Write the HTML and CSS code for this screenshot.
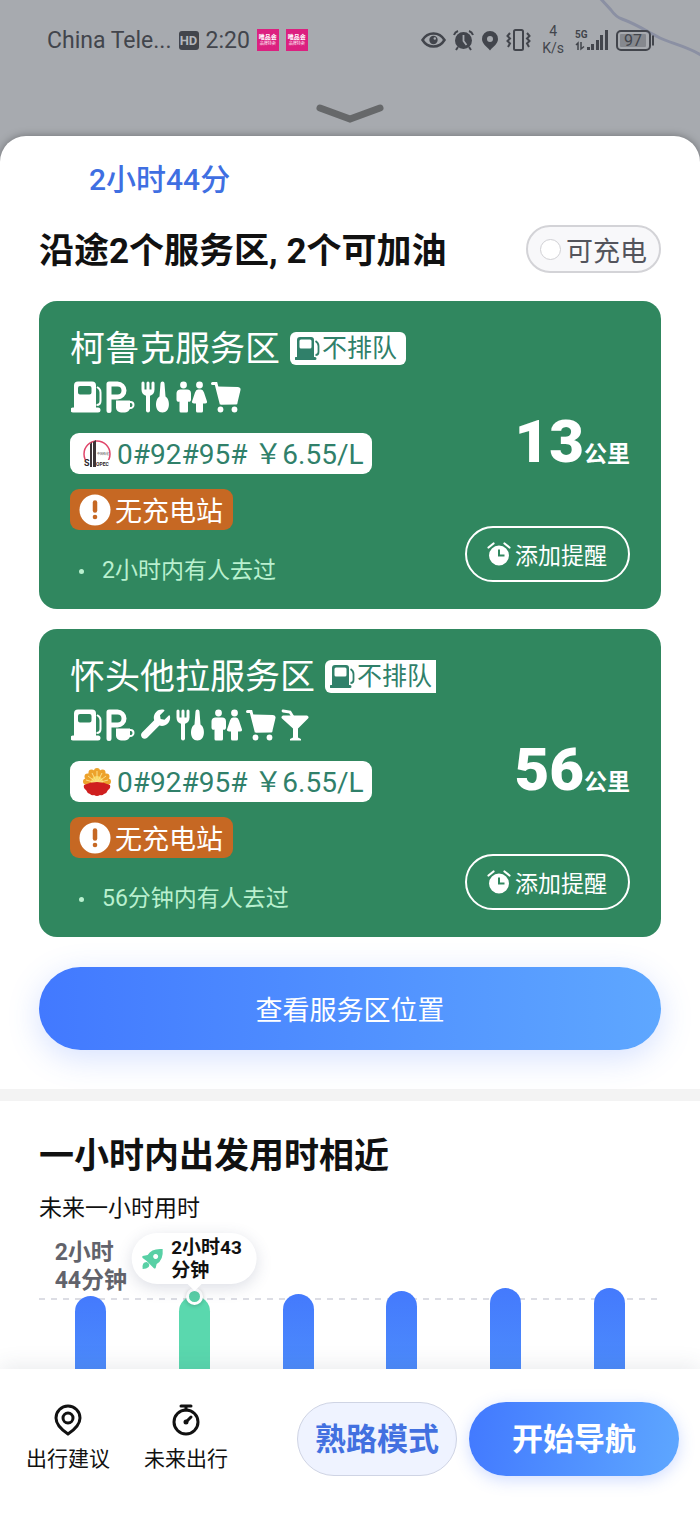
FILE: index.html
```html
<!DOCTYPE html>
<html lang="zh-CN">
<head>
    <meta charset="UTF-8">
    <meta name="viewport" content="width=device-width, initial-scale=1.0">
    <title>沿途服务区</title>
    <link rel="stylesheet" href="styles.css">
</head>
<body>

<!-- shared icons -->
<svg class="sprite" width="0" height="0" aria-hidden="true">
    <symbol id="pump" viewBox="0 0 31 32">
        <path fill-rule="evenodd" d="M7 0h14a4 4 0 0 1 4 4v22h2a2.500 2.500 0 0 1 0 5H2a2 2 0 0 1 0-5h1V4a4 4 0 0 1 4-4zM9 4.500a2 2 0 0 0-2 2V11a2 2 0 0 0 2 2h9.500a2 2 0 0 0 2-2V6.500a2 2 0 0 0-2-2z"/>
        <path d="M26 5.500l2 1.500q1.500 1.500 1.500 4v8.500q0 4-4 4" fill="none" stroke="currentColor" stroke-width="2"/>
    </symbol>
    <symbol id="pump-line" viewBox="0 0 25 25">
        <path fill-rule="evenodd" d="M5 1h11a3 3 0 0 1 3 3v17h1a1.500 1.500 0 0 1 0 3H1a1.500 1.500 0 0 1 0-3h1V4a3 3 0 0 1 3-3zM6 3.500a1.500 1.500 0 0 0-1.500 1.500v6a1.500 1.500 0 0 0 1.500 1.500h9a1.500 1.500 0 0 0 1.500-1.500V5A1.500 1.500 0 0 0 15 3.500z"/>
        <path d="M20.500 5q3 2 3 5v6q0 3-3 3" fill="none" stroke="currentColor" stroke-width="1.800"/>
    </symbol>
    <symbol id="rest" viewBox="0 0 31 32">
        <path d="M3 29V2.500h8.500a6.300 6.300 0 0 1 0 13H3" fill="none" stroke="currentColor" stroke-width="5" stroke-linecap="round" stroke-linejoin="round"/>
        <path d="M10 19h14v7a5 5 0 0 1-5 5h-4a5 5 0 0 1-5-5z"/>
        <path d="M23 20.500h1.500a2.500 2.500 0 0 1 0 6H23" fill="none" stroke="currentColor" stroke-width="2"/>
    </symbol>
    <symbol id="wrench" viewBox="0 0 545 560">
        <path d="M507.730 109.100c-2.240-9.030-13.540-12.090-20.120-5.510l-74.360 74.360-67.880-11.310-11.310-67.880 74.360-74.360c6.620-6.620 3.430-17.900-5.660-20.160-47.380-11.740-99.550.910-136.580 37.930-39.640 39.640-50.550 97.100-34.050 147.200L18.740 402.760c-24.990 24.990-24.990 65.510 0 90.500 24.990 24.990 65.510 24.990 90.500 0l213.210-213.210c50.120 16.710 107.470 5.680 147.370-34.220 37.070-37.070 49.700-89.320 37.910-136.730z"/>
    </symbol>
    <symbol id="food" viewBox="0 0 31 32">
        <path d="M2 1.500V8q0 5 5 5t5-5V1.500M7 1.500V12" fill="none" stroke="currentColor" stroke-width="3" stroke-linecap="round"/>
        <path d="M2 8h10q-1 5-5 5T2 8z"/>
        <path d="M7 12v17" fill="none" stroke="currentColor" stroke-width="4" stroke-linecap="round"/>
        <path d="M19.500 2a2 2 0 0 1 4 0l1 13c5 3 5 16-3 16s-8-13-3-16z"/>
    </symbol>
    <symbol id="people" viewBox="0 0 31 32">
        <circle cx="7.500" cy="3.500" r="3.400"/>
        <path d="M4 8h7a4 4 0 0 1 4 4v6a2 2 0 0 1-3 2v9.500a1.500 1.500 0 0 1-1.500 1.500H5a1.500 1.500 0 0 1-1.500-1.500V20A2 2 0 0 1 .500 18v-6A4 4 0 0 1 4 8z"/>
        <circle cx="23.500" cy="3.500" r="3.400"/>
        <path d="M22 8h3q2 0 3 3l3 9q.500 2-2 2h-2v7.500a1.500 1.500 0 0 1-1.500 1.500h-4a1.500 1.500 0 0 1-1.500-1.500V22h-2q-2.500 0-2-2l3-9q1-3 3-3z"/>
    </symbol>
    <symbol id="cart" viewBox="0 0 31 32">
        <path d="M1.500 2H5l5 19.500h15" fill="none" stroke="currentColor" stroke-width="3" stroke-linecap="round"/>
        <path d="M6 5l21 .500q3 .500 2.500 3L27 19q-.500 3.500-3 3.500L10 23z"/>
        <circle cx="9.500" cy="28" r="2.900"/>
        <circle cx="23.500" cy="28" r="2.900"/>
    </symbol>
    <symbol id="drink" viewBox="0 0 31 32">
        <path d="M2 6h24q2.500 1 1 3L17 19v9l3 1.500V31H9v-1.500l3-1.500v-9L1 9Q-.500 7 2 6z"/>
        <path d="M2 1.500l7 1 3 5" fill="none" stroke="currentColor" stroke-width="2.800" stroke-linecap="round"/>
    </symbol>
    <symbol id="alarm" viewBox="0 0 24 24">
        <path fill-rule="evenodd" d="M12 3.500a10 10 0 1 1 0 20 10 10 0 0 1 0-20zM11 7.500v7h6.500V12.500H13v-5z"/>
        <path d="M1.500 5.500l5-4M22.500 5.500l-5-4" fill="none" stroke="currentColor" stroke-width="2.200" stroke-linecap="round"/>
    </symbol>
    <symbol id="warn" viewBox="0 0 32 32">
        <circle cx="16" cy="16" r="15.500" fill="#fff"/>
        <path d="M16 8.500v8" stroke="#c66823" stroke-width="4.500" stroke-linecap="round"/>
        <circle cx="16" cy="23" r="2.300" fill="#c66823"/>
    </symbol>
</svg>

<div class="map">
    <svg class="river" width="110" height="60" viewBox="0 0 110 60" aria-hidden="true">
        <path d="M10-2l11 12q5 7 11 9c14 5 28 14 38 19s26 8 41 17" fill="none" stroke="#8b90a3" stroke-width="3"/>
    </svg>
    <header class="status">
        <span class="carrier">China Tele...</span>
        <span class="hd">HD</span>
        <span class="carrier">2:20</span>
        <span class="app"><b>唯品会</b><small>品牌特卖</small></span>
        <span class="app"><b>唯品会</b><small>品牌特卖</small></span>
        <div class="status-right">
            <svg width="25" height="18" viewBox="0 0 25 18"><path d="M1.500 9q4-6.500 11-6.500T23.500 9q-4 6.500-11 6.500T1.500 9z" fill="none" stroke="#42454c" stroke-width="2.500"/><circle cx="12.500" cy="9" r="4.200"/><circle cx="13.800" cy="7.500" r="1.200" fill="#a7aab0"/></svg>
            <svg width="21" height="21" viewBox="0 0 21 21"><circle cx="10.500" cy="10.500" r="8.500"/><path d="M1 5q1-3 4-4M20 5q-1-3-4-4M5 17l-2 3M16 17l2 3" fill="none" stroke="#42454c" stroke-width="2"/><path d="M10.500 5v6l3 4" fill="none" stroke="#a7aab0" stroke-width="1.800"/></svg>
            <svg width="18" height="21" viewBox="0 0 18 21"><path fill-rule="evenodd" d="M9 1a8 8 0 0 1 8 8c0 5-5 7.500-8 11.500C6 16.500 1 14 1 9a8 8 0 0 1 8-8zm0 5a3 3 0 1 0 0 6 3 3 0 0 0 0-6z"/></svg>
            <svg width="25" height="22" viewBox="0 0 25 22"><g fill="none" stroke="#42454c" stroke-width="2"><rect x="8" y="1" width="9" height="20" rx="1.500"/><path d="M4 4L1.500 7 4 9.500 1.500 12 4 14.500 2 18M21 4l2.500 3L21 9.500l2.500 2.500-2.500 2.500 2 3.500"/></g></svg>
            <span class="speed">4<br>K/s</span>
            <svg width="34" height="22" viewBox="0 0 34 22"><text x="0" y="9" font-size="10" font-weight="700">5G</text><path d="M12 18h3v3h-3zM16 15h3v6h-3zM21 11h3v10h-3zM25 6h3v15h-3zM30 1h3v20h-3z"/><path d="M3 21v-7l-2 2M6 13v7l3-2.500" fill="none" stroke="#42454c" stroke-width="1.500"/></svg>
            <svg width="39" height="21" viewBox="0 0 39 21"><rect x="1" y="1" width="33" height="19" rx="4" fill="none" stroke="#42454c" stroke-width="2"/><rect x="4" y="4" width="26" height="13" rx="1" fill="#85888e"/><path d="M36 5.500h2v10h-2z"/><text x="17" y="16" font-size="16" text-anchor="middle">97</text></svg>
        </div>
    </header>
    <svg class="chevron" width="70" height="22" viewBox="0 0 70 22" aria-hidden="true">
        <path d="M5 5l30 11L65 5" fill="none" stroke="#66686a" stroke-width="7" stroke-linecap="round"/>
    </svg>
</div>

<main class="sheet">
    <section class="services">
        <div class="duration">2小时44分</div>
        <div class="title-row">
            <h2>沿途2个服务区, 2个可加油</h2>
            <label class="filter" for="charge"><input type="checkbox" id="charge" name="charge">可充电</label>
        </div>

        <article class="card">
            <div class="info">
                <div class="name-row">
                    <h3>柯鲁克服务区</h3>
                    <span class="tag"><svg width="25" height="25"><use href="#pump-line"/></svg>不排队</span>
                </div>
                <div class="amenities">
                    <svg><use href="#pump"/></svg>
                    <svg><use href="#rest"/></svg>
                    <svg><use href="#food"/></svg>
                    <svg><use href="#people"/></svg>
                    <svg><use href="#cart"/></svg>
                </div>
                <div class="price">
                    <svg width="30" height="30" viewBox="0 0 30 30" aria-hidden="true">
                        <circle cx="15" cy="15" r="13" fill="none" stroke="#e0466a" stroke-width="1.500"/>
                        <path d="M8 5l2-2v18H8zM11 3l3-2v20h-3z" fill="#3d3538"/>
                        <text x="15" y="16" font-size="3" fill="#333">中国石化</text>
                        <path d="M1 21h28v8H1z" fill="#fff"/>
                        <path d="M8 20h2v8H8zM11 20h3v8h-3z" fill="#3d3538"/>
                        <text x="2" y="27" font-size="9" font-weight="700" fill="#2f2628">S</text>
                        <text x="14" y="27" font-size="5" font-weight="700" fill="#2f2628">OPEC</text>
                    </svg>
                    <span>0#92#95# ￥6.55/L</span>
                </div>
                <div class="no-charge"><svg width="32" height="32"><use href="#warn"/></svg>无充电站</div>
                <div class="visited">2小时内有人去过</div>
            </div>
            <div class="side">
                <div class="distance"><strong>13</strong>公里</div>
                <button type="button" class="remind"><svg width="24" height="24"><use href="#alarm"/></svg>添加提醒</button>
            </div>
        </article>

        <article class="card">
            <div class="info">
                <div class="name-row">
                    <h3>怀头他拉服务区</h3>
                    <span class="tag tag-cut"><svg width="25" height="25"><use href="#pump-line"/></svg>不排队</span>
                </div>
                <div class="amenities">
                    <svg><use href="#pump"/></svg>
                    <svg><use href="#rest"/></svg>
                    <svg><use href="#wrench"/></svg>
                    <svg><use href="#food"/></svg>
                    <svg><use href="#people"/></svg>
                    <svg><use href="#cart"/></svg>
                    <svg><use href="#drink"/></svg>
                </div>
                <div class="price">
                    <svg width="30" height="30" viewBox="0 0 30 30" aria-hidden="true">
                        <g fill="#eda22c">
                            <circle cx="15" cy="15" r="12"/>
                            <circle cx="15" cy="4" r="3"/><circle cx="9.500" cy="5.500" r="3"/><circle cx="20.500" cy="5.500" r="3"/>
                            <circle cx="5.500" cy="9.500" r="3"/><circle cx="24.500" cy="9.500" r="3"/>
                            <circle cx="4" cy="14.500" r="3"/><circle cx="26" cy="14.500" r="3"/>
                        </g>
                        <circle cx="15" cy="15" r="6" fill="#f8d55c"/>
                        <path d="M15 16V4M15 16L10 6M15 16l5-10M15 16L6 9M15 16l9-7M15 16L4 13M15 16l11-3" stroke="#fbe08a" stroke-width="1"/>
                        <path d="M2 18q13-6 26 0 1 3-2 5-1 3-4 4-2 2-4 1-3 2-6 0-2 1-4-1-3-1-4-4-3-2-2-5z" fill="#cf1f1f"/>
                    </svg>
                    <span>0#92#95# ￥6.55/L</span>
                </div>
                <div class="no-charge"><svg width="32" height="32"><use href="#warn"/></svg>无充电站</div>
                <div class="visited">56分钟内有人去过</div>
            </div>
            <div class="side">
                <div class="distance"><strong>56</strong>公里</div>
                <button type="button" class="remind"><svg width="24" height="24"><use href="#alarm"/></svg>添加提醒</button>
            </div>
        </article>

        <button type="button" class="view-all">查看服务区位置</button>
    </section>

    <section class="forecast">
        <h2>一小时内出发用时相近</h2>
        <p>未来一小时用时</p>
        <div class="chart">
            <div class="col">
                <span class="label">2小时<br>44分钟</span>
                <div class="bar" style="height: 73px"></div>
            </div>
            <div class="col">
                <div class="bar best" style="height: 73px">
                    <span class="dot"></span>
                    <div class="tip">
                        <svg width="22" height="22" viewBox="0 0 22 22"><path fill-rule="evenodd" d="M21 1q1 11-6 15l-1 4q-1 1-2 0l-3-3-4-4-4-3q-1-1 0-2l5-1q4-7 15-6zm-7 5a2.500 2.500 0 1 0 .010 0z"/><path d="M1 21q-1-7 4-7 4 2 2 5-2 2-6 2z"/></svg>
                        <span>2小时43<br>分钟</span>
                    </div>
                </div>
            </div>
            <div class="col"><div class="bar" style="height: 75px"></div></div>
            <div class="col"><div class="bar" style="height: 78px"></div></div>
            <div class="col"><div class="bar" style="height: 81px"></div></div>
            <div class="col"><div class="bar" style="height: 81px"></div></div>
        </div>
    </section>
</main>

<footer class="actions">
    <button type="button" class="link-btn">
        <svg width="36" height="36" viewBox="0 0 36 36"><path d="M18 32C12 28 6 23 6 16a12 12 0 0 1 24 0c0 7-6 12-12 16z"/><circle cx="18" cy="16" r="5"/></svg>
        出行建议
    </button>
    <button type="button" class="link-btn">
        <svg width="36" height="36" viewBox="0 0 36 36"><circle cx="18" cy="20" r="12"/><path d="M13 4h10M18 4v4M18 20l5-5" stroke-linecap="round"/><circle cx="18" cy="20" r="1"/></svg>
        未来出行
    </button>
    <button type="button" class="pill familiar">熟路模式</button>
    <button type="button" class="pill start">开始导航</button>
</footer>

</body>
</html>
```
FILE: styles.css
```css
* {
    box-sizing: border-box;
}
body {
    margin: 0;
    min-height: 100vh;
    display: flex;
    flex-direction: column;
    font-family: Roboto, "Noto Sans CJK SC", sans-serif;
    background: #a7aaaf;
    color: #111;
}
h2, h3, p {
    margin: 0;
}
button {
    font-family: inherit;
    border: 0;
    padding: 0;
    cursor: pointer;
}
svg {
    display: block;
    flex: none;
    fill: currentColor;
}
.sprite {
    position: absolute;
}

/* status bar over the dimmed map */
.map {
    position: relative;
    height: 136px;
    padding-top: 20px;
    background: #a7aaaf;
    color: #42454c;
}
.river {
    position: absolute;
    top: 0;
    right: 0;
}
.status {
    position: relative;
    display: flex;
    align-items: center;
    gap: 7px;
    height: 40px;
    padding: 0 45px 0 47px;
}
.carrier {
    padding-top: 2px;
    font-size: 23px;
    line-height: 40px;
}
.hd {
    width: 20px;
    border-radius: 3px;
    background: #42454c;
    color: #b4b7bc;
    font-size: 13px;
    font-weight: bold;
    line-height: 19px;
    text-align: center;
}
.app {
    width: 22px;
    height: 22px;
    padding-top: 4px;
    background: #dc2080;
    color: #fff;
    text-align: center;
}
.app b, .app small {
    display: block;
    font-size: 6px;
    line-height: 8px;
}
.app small {
    font-size: 4px;
    line-height: 5px;
}
.status-right {
    display: flex;
    align-items: center;
    gap: 7px;
    margin-left: auto;
}
.speed {
    margin: 0 4px;
    font-size: 14px;
    line-height: 17px;
    text-align: center;
}
.chevron {
    margin: 43px auto 0;
}

.sheet {
    position: relative;
    border-radius: 26px 26px 0 0;
    background: #fff;
    box-shadow: 0 0 8px rgba(0, 0, 0, 0.35);
}
.services {
    padding: 24px 39px 39px;
    border-bottom: 12px solid #f3f3f3;
}
.duration {
    margin-left: 50px;
    color: #3f6fe2;
    font-size: 30px;
    font-weight: 500;
    line-height: 40px;
}
.title-row {
    display: flex;
    align-items: center;
    justify-content: space-between;
    margin: 25px 0 28px;
}
h2 {
    padding-top: 6px;
    font-size: 35px;
    line-height: 42px;
}
.filter {
    display: flex;
    align-items: center;
    gap: 5px;
    height: 48px;
    padding: 0 12px;
    border: 2px solid #d3d3d7;
    border-radius: 24px;
    background: #f8f8fa;
    color: #53545c;
    font-size: 27px;
}
.filter input {
    appearance: none;
    width: 21px;
    height: 21px;
    margin: 0;
    border: 1px solid #d0d0d4;
    border-radius: 50%;
    background: #fff;
}
.filter input:checked {
    background: #4678fb;
}

.card {
    display: flex;
    justify-content: space-between;
    margin-bottom: 20px;
    padding: 26px 31px 27px;
    border-radius: 18px;
    background: #30875f;
    color: #fff;
}
.info {
    display: flex;
    flex-direction: column;
    align-items: flex-start;
}
.name-row {
    display: flex;
    align-items: center;
    gap: 10px;
}
h3 {
    padding-top: 4px;
    font-size: 35px;
    font-weight: normal;
    line-height: 38px;
}
.tag {
    display: flex;
    align-items: center;
    gap: 2px;
    height: 33px;
    padding: 0 9px 0 5px;
    border-radius: 6px;
    background: #fff;
    color: #30806a;
    font-size: 25px;
    line-height: 33px;
}
.tag-cut {
    padding-right: 4px;
    border-radius: 6px 0 0 6px;
}
.amenities {
    display: flex;
    gap: 4px;
    margin: 12px 0 19px;
    padding-left: 1px;
}
.amenities svg {
    width: 31px;
    height: 33px;
}
.price, .no-charge {
    display: flex;
    align-items: center;
    height: 41px;
    border-radius: 9px;
}
.price {
    gap: 5px;
    margin-bottom: 15px;
    padding: 0 8px 0 12px;
    background: #fff;
    color: #30806a;
    font-size: 28px;
}
.price span {
    padding-bottom: 3px;
}
.no-charge {
    gap: 4px;
    margin-bottom: 26px;
    padding: 0 10px 0 9px;
    background: #c66823;
    font-size: 27px;
}
.visited {
    display: flex;
    align-items: center;
    gap: 18px;
    padding: 4px 0 0 9px;
    color: #b9f0cf;
    font-size: 23px;
    line-height: 22px;
}
.visited::before {
    content: "";
    width: 5px;
    height: 5px;
    border-radius: 50%;
    background: #b9f0cf;
}
.side {
    display: flex;
    flex-direction: column;
    align-items: flex-end;
    justify-content: flex-end;
    gap: 41px;
}
.distance {
    font-size: 23px;
    font-weight: bold;
    line-height: 60px;
}
.distance strong {
    font-size: 60px;
}
.remind {
    display: flex;
    align-items: center;
    gap: 4px;
    height: 56px;
    padding: 0 21px 0 20px;
    border: 2px solid #fff;
    border-radius: 28px;
    background: none;
    color: #fff;
    font-size: 23px;
}
.view-all {
    width: 100%;
    height: 83px;
    margin-top: 10px;
    border-radius: 42px;
    background: linear-gradient(90deg, #4279ff, #5ea7ff);
    box-shadow: 0 8px 32px rgba(70, 120, 255, 0.22);
    color: #fff;
    font-size: 27px;
}

/* travel time forecast */
.forecast {
    padding: 29px 39px 0;
}
.forecast p {
    margin-top: 16px;
    font-size: 23px;
    line-height: 30px;
}
.chart {
    position: relative;
    display: grid;
    grid-template-columns: repeat(6, 1fr);
    height: 145px;
}
.chart::before {
    content: "";
    position: absolute;
    left: 0;
    right: 0;
    bottom: 69px;
    height: 2px;
    background: repeating-linear-gradient(90deg, #dcdde4 0 6px, transparent 6px 12px);
}
.col {
    position: relative;
    display: flex;
    flex-direction: column;
    align-items: center;
    justify-content: flex-end;
}
.label {
    margin-bottom: 1px;
    color: #62636b;
    font-size: 23px;
    font-weight: bold;
    line-height: 28px;
    white-space: nowrap;
}
.bar {
    position: relative;
    width: 31px;
    border-radius: 16px 16px 0 0;
    background: linear-gradient(#447afd, #4c8bfc);
}
.best {
    background: #5ad8ae;
}
.dot {
    position: absolute;
    top: -8px;
    left: 7px;
    width: 17px;
    height: 17px;
    border: 3px solid #fff;
    border-radius: 50%;
    background: #58cfa6;
    box-shadow: 0 1px 4px rgba(0, 0, 0, 0.2);
}
.tip {
    position: absolute;
    left: 50%;
    bottom: 85px;
    display: flex;
    align-items: center;
    gap: 7px;
    height: 51px;
    padding: 0 15px 0 10px;
    border-radius: 26px;
    background: #fff;
    box-shadow: 0 4px 16px rgba(60, 70, 110, 0.18);
    color: #111;
    font-size: 19px;
    font-weight: bold;
    line-height: 23px;
    white-space: nowrap;
    transform: translateX(-50%);
}
.tip svg {
    color: #58d0a5;
}
.tip::after {
    content: "";
    position: absolute;
    top: 100%;
    left: 50%;
    margin-left: -7px;
    border: 7px solid transparent;
    border-top-color: #fff;
    border-bottom: 0;
}

.actions {
    position: relative;
    display: flex;
    flex: 1;
    align-items: flex-start;
    padding: 33px 21px 39px 26px;
    background: #fff;
    box-shadow: 0 -4px 20px rgba(60, 70, 90, 0.1);
}
.link-btn {
    display: flex;
    flex-direction: column;
    align-items: center;
    gap: 6px;
    margin-right: 34px;
    background: none;
    color: #111;
    font-size: 21px;
    line-height: 30px;
}
.link-btn svg {
    fill: none;
    stroke: currentColor;
    stroke-width: 3;
}
.pill {
    width: 160px;
    height: 74px;
    padding-bottom: 5px;
    border-radius: 37px;
    font-size: 31px;
    font-weight: bold;
}
.familiar {
    margin-left: auto;
    border: 1px solid #cfd4e4;
    background: #eff3ff;
    color: #4270e0;
}
.start {
    width: 210px;
    margin-left: 12px;
    background: linear-gradient(100deg, #4279ff, #5ea7ff);
    box-shadow: 0 4px 16px rgba(70, 120, 255, 0.25);
    color: #fff;
}
```
